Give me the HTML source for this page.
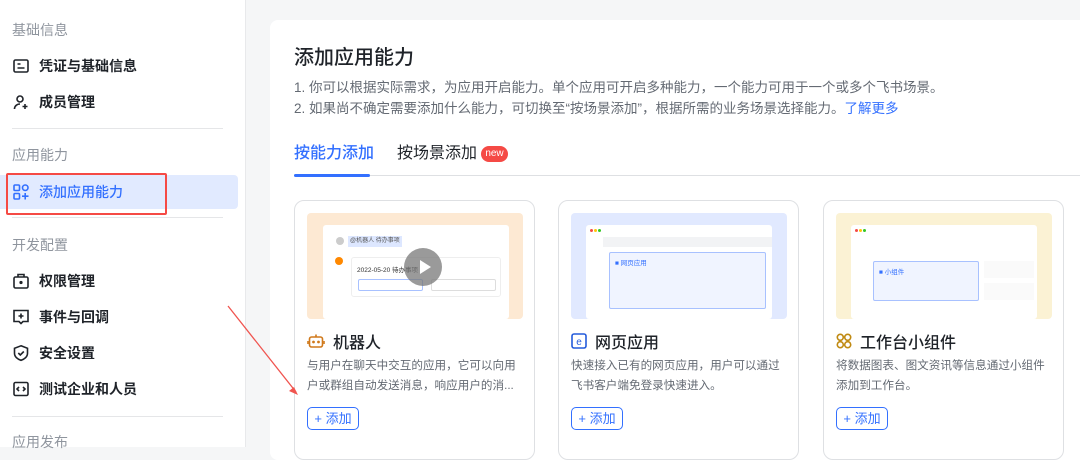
<!DOCTYPE html>
<html><head><meta charset="utf-8"><style>
*{margin:0;padding:0;box-sizing:border-box}
body{width:1080px;height:447px;overflow:hidden;background:#f5f6f7;font-family:"Liberation Sans","Noto Sans CJK SC",sans-serif;position:relative;color:#1f2329}
.sb{position:absolute;left:0;top:0;width:246px;height:447px;background:#fff;border-right:1px solid #e8e9eb}
.h{position:absolute;left:12px;font-size:14px;color:#8f959e}
.it{position:absolute;left:12px;font-size:14px;font-weight:600;color:#1f2329;display:flex;align-items:center;gap:9px}
.it svg{width:18px;height:18px}
.dv{position:absolute;left:12px;width:211px;height:1px;background:#e5e6e8}
.panel{position:absolute;left:270px;top:20px;width:820px;height:440px;background:#fff;border-radius:8px}
.card{position:absolute;top:200px;width:241px;height:260px;border:1px solid #dee0e3;border-radius:10px;background:#fff}
.img{position:absolute;left:12px;top:12px;width:216px;height:106px;border-radius:4px;overflow:hidden}
.ct{position:absolute;left:12px;top:128px;font-size:16px;font-weight:500;display:flex;align-items:center;gap:8px}
.cd{position:absolute;left:12px;top:155px;white-space:nowrap;font-size:11.6px;line-height:20px;color:#646a73}
.btn{position:absolute;left:12px;top:206px;width:52px;height:23px;border:1px solid #3370ff;border-radius:5px;color:#3370ff;font-size:13px;line-height:21px;text-align:center}
.win{position:absolute;background:#fff;border-radius:3px}
</style></head><body>
<div class="sb">
<div class="h" style="top:20px">基础信息</div>
<div class="it" style="top:56px"><svg viewBox="0 0 18 18" fill="none" stroke="#1f2329" stroke-width="1.6"><rect x="2" y="3" width="14" height="12" rx="1.5"/><path d="M5.5 7h3M5.5 11h7"/></svg>凭证与基础信息</div>
<div class="it" style="top:92px"><svg viewBox="0 0 18 18" fill="none" stroke="#1f2329" stroke-width="1.6"><circle cx="8" cy="6" r="3"/><path d="M2.5 16c0-3 2.5-5 5.5-5M13 11v5M10.5 13.5h5"/></svg>成员管理</div>
<div class="dv" style="top:128px"></div>
<div class="h" style="top:145px">应用能力</div>
<div style="position:absolute;left:0;top:175px;width:238px;height:34px;background:#e1eaff;border-radius:0 4px 4px 0"></div>
<div style="position:absolute;left:6px;top:173px;width:161px;height:42px;border:2.5px solid #f54a45;border-radius:2px"></div>
<div class="it" style="top:182px;color:#3370ff;font-weight:500"><svg viewBox="0 0 18 18" fill="none" stroke="#3370ff" stroke-width="1.6"><rect x="2" y="2" width="5.5" height="5.5" rx="1"/><rect x="10.5" y="2" width="5.5" height="5.5" rx="2.7"/><rect x="2" y="10.5" width="5.5" height="5.5" rx="1"/><path d="M13.2 10v6.5M10 13.2h6.5"/></svg>添加应用能力</div>
<div class="dv" style="top:217px"></div>
<div class="h" style="top:235px">开发配置</div>
<div class="it" style="top:271px"><svg viewBox="0 0 18 18" fill="none" stroke="#1f2329" stroke-width="1.6"><rect x="2" y="5" width="14" height="11" rx="1.5"/><path d="M6 5V2.5h6V5"/><circle cx="9" cy="10.5" r=".8" fill="#1f2329"/></svg>权限管理</div>
<div class="it" style="top:307px"><svg viewBox="0 0 18 18" fill="none" stroke="#1f2329" stroke-width="1.6"><path d="M2 2.5h14v11H11l-2 2-2-2H2z"/><path d="M9 5.5v5M6.5 8h5"/></svg>事件与回调</div>
<div class="it" style="top:343px"><svg viewBox="0 0 18 18" fill="none" stroke="#1f2329" stroke-width="1.6"><path d="M9 1.8l6.5 2.5v5c0 3.5-3 6-6.5 7-3.5-1-6.5-3.5-6.5-7v-5z"/><path d="M6.3 9l2 2 3.5-3.5"/></svg>安全设置</div>
<div class="it" style="top:379px"><svg viewBox="0 0 18 18" fill="none" stroke="#1f2329" stroke-width="1.6"><rect x="2" y="2.5" width="14" height="13" rx="1.5"/><path d="M7 7l-2 2 2 2M11 7l2 2-2 2"/></svg>测试企业和人员</div>
<div class="dv" style="top:416px"></div>
<div class="h" style="top:432px">应用发布</div>
</div>

<div class="panel"></div>
<div style="position:absolute;left:294px;top:41px;font-size:20px;font-weight:500">添加应用能力</div>
<div style="position:absolute;left:294px;top:77px;font-size:13.5px;line-height:21px;color:#646a73">1. 你可以根据实际需求，为应用开启能力。单个应用可开启多种能力，一个能力可用于一个或多个飞书场景。<br>2. 如果尚不确定需要添加什么能力，可切换至“按场景添加”，根据所需的业务场景选择能力。<span style="color:#3370ff">了解更多</span></div>
<div style="position:absolute;left:294px;top:143px;font-size:16px;color:#3370ff;font-weight:500;line-height:22px">按能力添加</div>
<div style="position:absolute;left:397px;top:143px;font-size:16px;color:#1f2329;line-height:22px">按场景添加</div>
<div style="position:absolute;left:481px;top:146px;width:27px;height:16px;background:#f54a45;border-radius:8px;color:#fff;font-size:10px;line-height:16px;text-align:center">new</div>
<div style="position:absolute;left:294px;top:175px;width:790px;height:1px;background:#dee0e3"></div>
<div style="position:absolute;left:294px;top:174px;width:76px;height:3px;background:#3370ff;border-radius:2px"></div>

<div class="card" style="left:294px">
<div class="img" style="background:#fde9d3">
<div class="win" style="left:16px;top:12px;width:186px;height:94px"></div>
<div style="position:absolute;left:29px;top:24px;width:8px;height:8px;border-radius:50%;background:#ccc"></div>
<div style="position:absolute;left:41px;top:23px;width:54px;height:11px;background:#dde7ff;font-size:6px;line-height:11px;color:#555;padding-left:2px">@机器人 待办事项</div>
<div style="position:absolute;left:28px;top:44px;width:8px;height:8px;border-radius:50%;background:#ff8800"></div>
<div style="position:absolute;left:44px;top:44px;width:150px;height:40px;border:1px solid #eee;border-radius:3px;font-size:6.5px;padding:6px 5px;color:#333">2022-05-20 待办事项</div>
<div style="position:absolute;left:51px;top:66px;width:65px;height:12px;border:1px solid #a8c1ff;border-radius:2px"></div>
<div style="position:absolute;left:124px;top:66px;width:65px;height:12px;border:1px solid #ddd;border-radius:2px"></div>
<div style="position:absolute;left:97px;top:35px;width:38px;height:38px;border-radius:50%;background:rgba(120,120,120,.75)"></div>
<div style="position:absolute;left:113px;top:47px;width:0;height:0;border-left:11px solid #fff;border-top:7px solid transparent;border-bottom:7px solid transparent"></div>
</div>
<div class="ct"><svg width="18" height="18" viewBox="0 0 18 18" fill="none" stroke="#d0791b" stroke-width="1.6"><rect x="2.5" y="5" width="13" height="10" rx="2"/><path d="M9 5V2.5M1 9v3M17 9v3"/><circle cx="6.5" cy="10" r=".6" fill="#d0791b"/><circle cx="11.5" cy="10" r=".6" fill="#d0791b"/></svg>机器人</div>
<div class="cd">与用户在聊天中交互的应用，它可以向用<br>户或群组自动发送消息，响应用户的消...</div>
<div class="btn">+ 添加</div>
</div>

<div class="card" style="left:558px">
<div class="img" style="background:#e1e9ff">
<div class="win" style="left:15px;top:12px;width:186px;height:94px"></div>
<div style="position:absolute;left:19px;top:16px;width:3px;height:3px;border-radius:50%;background:#f54a45;box-shadow:4px 0 #ffc60a,8px 0 #34c724"></div>
<div style="position:absolute;left:32px;top:24px;width:169px;height:10px;background:#f2f3f5"></div>
<div style="position:absolute;left:38px;top:39px;width:157px;height:57px;border:1px solid #a8c1ff;background:#f0f4ff;border-radius:2px;font-size:6.5px;color:#3370ff;padding:4px 5px">■ 网页应用</div>
</div>
<div class="ct"><svg width="16" height="16" viewBox="0 0 16 16"><rect x="1" y="1" width="14" height="14" rx="2" fill="none" stroke="#245bdb" stroke-width="1.6"/><text x="8" y="12" font-size="10" text-anchor="middle" fill="#245bdb" font-family="Liberation Sans">e</text></svg>网页应用</div>
<div class="cd">快速接入已有的网页应用，用户可以通过<br>飞书客户端免登录快速进入。</div>
<div class="btn">+ 添加</div>
</div>

<div class="card" style="left:823px">
<div class="img" style="background:#fbf2d4">
<div class="win" style="left:15px;top:12px;width:186px;height:94px"></div>
<div style="position:absolute;left:19px;top:16px;width:3px;height:3px;border-radius:50%;background:#f54a45;box-shadow:4px 0 #ffc60a,8px 0 #34c724"></div>
<div style="position:absolute;left:37px;top:48px;width:106px;height:40px;border:1px solid #a8c1ff;background:#f0f4ff;border-radius:2px;font-size:6.5px;color:#3370ff;padding:4px 5px">■ 小组件</div>
<div style="position:absolute;left:148px;top:48px;width:50px;height:17px;background:#fafafa"></div>
<div style="position:absolute;left:148px;top:70px;width:50px;height:17px;background:#fafafa"></div>
</div>
<div class="ct"><svg width="16" height="16" viewBox="0 0 16 16" fill="none" stroke="#c08a12" stroke-width="1.6"><circle cx="4.3" cy="4.3" r="3"/><circle cx="11.7" cy="4.3" r="3"/><circle cx="4.3" cy="11.7" r="3"/><circle cx="11.7" cy="11.7" r="3"/></svg>工作台小组件</div>
<div class="cd">将数据图表、图文资讯等信息通过小组件<br>添加到工作台。</div>
<div class="btn">+ 添加</div>
</div>

<svg style="position:absolute;left:0;top:0" width="1080" height="447"><line x1="228" y1="306" x2="296" y2="392" stroke="#f0544f" stroke-width="1.3"/><path d="M298 395l-9-4 5-4z" fill="#f0544f"/></svg>
</body></html>
